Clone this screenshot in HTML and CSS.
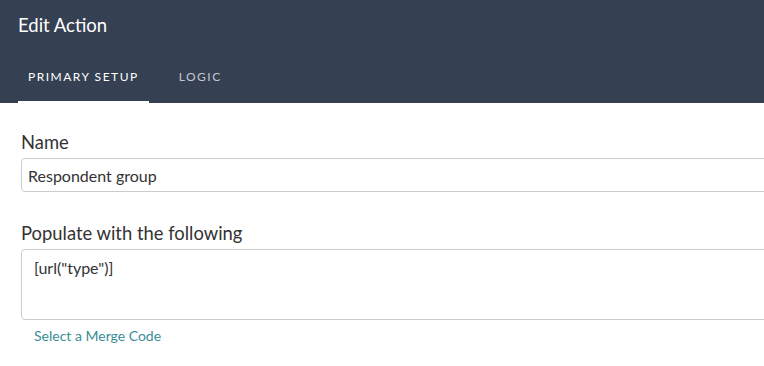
FILE: index.html
```html
<!DOCTYPE html>
<html lang="en">
<head>
<meta charset="UTF-8">
<meta name="viewport" content="width=device-width, initial-scale=1.0">
<title>Edit Action</title>
<link rel="stylesheet" href="styles.css">
</head>
<body>
<div class="panel">
    <div class="panel-header">
        <h1 class="panel-title">Edit Action</h1>
        <div class="tabs">
            <a class="tab active">Primary Setup</a>
            <a class="tab">Logic</a>
        </div>
    </div>
    <div class="panel-body">
        <div class="field">
            <label class="field-label">Name</label>
            <input class="text-input" type="text" value="Respondent group">
        </div>
        <div class="field">
            <label class="field-label">Populate with the following</label>
            <textarea class="text-area">[url("type")]</textarea>
            <a class="merge-link">Select a Merge Code</a>
        </div>
    </div>
</div>
</body>
</html>
```

FILE: styles.css
```css
body {
    margin: 0;
    padding: 0;
    font-family: Lato, "Open Sans", sans-serif;
    background: #fff;
    overflow: hidden;
}

.panel {
    width: 800px;
}

.panel-header {
    background-color: #354052;
    padding: 0 18px;
    height: 103px;
    box-sizing: border-box;
    display: flex;
    flex-direction: column;
}

.panel-title {
    margin: 0;
    padding-top: 14px;
    font-size: 18.5px;
    font-weight: normal;
    color: #fff;
    line-height: 22px;
}

.tabs {
    display: flex;
    margin-top: auto;
}

.tab {
    display: block;
    padding: 0 10px 17px;
    font-size: 12px;
    letter-spacing: 1.5px;
    text-transform: uppercase;
    color: #c3c8d0;
    border-bottom: 2px solid transparent;
    margin-right: 20px;
    line-height: 14px;
    cursor: pointer;
}

.tab.active {
    color: #fff;
    border-bottom-color: #fff;
}

.panel-body {
    padding: 28px 0 0 21px;
}

.field {
    display: flex;
    flex-direction: column;
    margin-bottom: 30px;
}

.field-label {
    font-size: 18.4px;
    color: #333;
    line-height: 22px;
    margin-bottom: 5px;
}

.text-input,
.text-area {
    font-family: inherit;
    font-size: 16px;
    color: #333;
    border: 1px solid #ccc;
    border-radius: 4px;
    box-sizing: border-box;
    width: 800px;
}

.text-input {
    height: 34px;
    padding: 0 6px;
}

.text-area {
    height: 71px;
    padding: 8px 12px;
    resize: none;
}

.merge-link {
    margin: 7px 0 0 13px;
    font-size: 14px;
    color: #3a8e97;
    cursor: pointer;
}
```
